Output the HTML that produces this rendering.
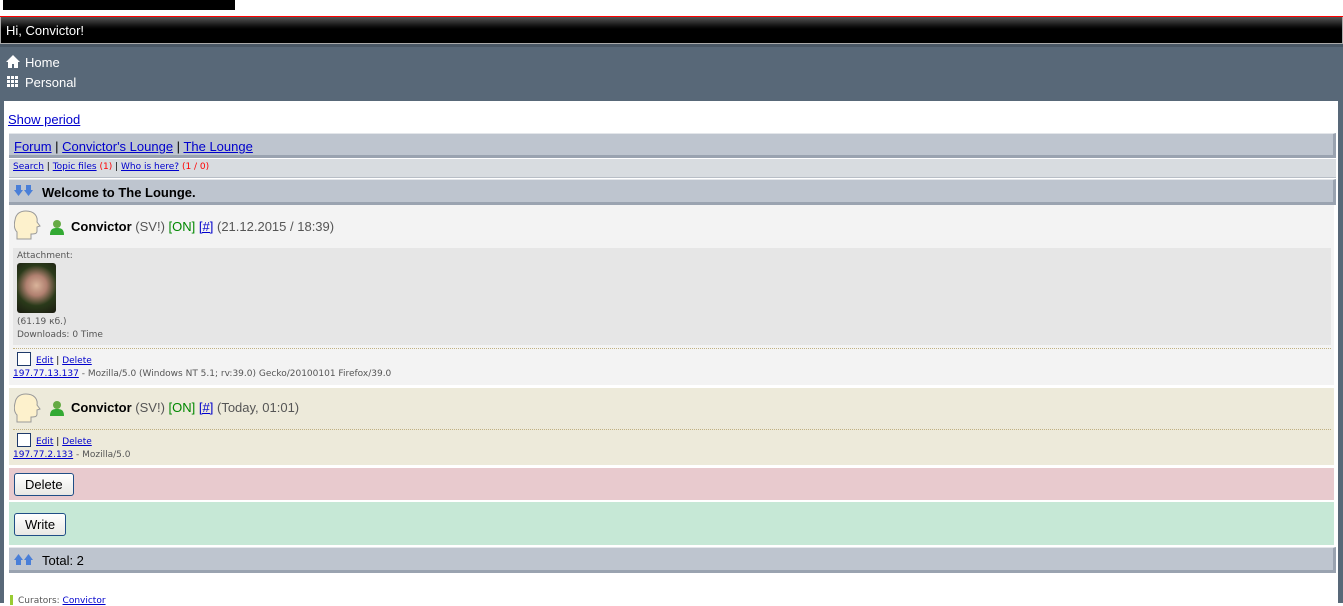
<!DOCTYPE html>
<html><head><style>
body{margin:0;width:1343px;height:603px;overflow:hidden;background:#fff;font-family:"Liberation Sans",Arial,sans-serif;position:relative}
.a{position:absolute}
a{color:#00c;text-decoration:underline}
.bar{position:absolute;left:9px;width:1324px;background:#bec5cf;border-top:1px solid #e3e6ea;border-right:3px solid #9aa3b0;border-bottom:3px solid #9aa3b0}
.sm{font-size:9px;font-family:"DejaVu Sans",Verdana,sans-serif}
.btn{position:absolute;left:14px;background:linear-gradient(#fff,#e8e8e4);border:1px solid #1f4e86;border-radius:3px;font-size:13px;padding:3px 10px;color:#000;font-family:"Liberation Sans",Arial,sans-serif}
.dot{position:absolute;left:13px;width:1318px;border-top:1px dotted #c0b080}
.g{color:#555}
</style></head><body>
<div class="a" style="left:3px;top:0;width:232px;height:10px;background:#000"></div>
<div class="a" style="left:0;top:16px;width:1343px;height:1px;background:#f00"></div>
<div class="a" style="left:0;top:17px;height:27px;background:linear-gradient(#555 0,#111 9px,#000 12px);border:1px solid #aaa;border-top:none;color:#fff;font-size:13px;line-height:28px;padding-left:5px;box-sizing:border-box;width:1343px">Hi, Convictor!</div>
<div class="a" style="left:0;top:44px;width:1343px;height:559px;background:#586878"></div>
<div class="a" style="left:0;top:44px;width:1343px;height:3px;background:#4a5866"></div>
<div class="a" style="left:4px;top:101px;width:1334px;height:502px;background:#fff"></div>
<svg class="a" style="left:6px;top:55px" width="14" height="13" viewBox="0 0 14 13"><path d="M7 0L0 7h2v6h4V9h2v4h4V7h2z" fill="#fff"/></svg>
<div class="a" style="left:25px;top:55px;color:#fff;font-size:13px">Home</div>
<svg class="a" style="left:7px;top:76px" width="12" height="12"><g fill="#fff"><rect x="0" y="0" width="3" height="3"/><rect x="4" y="0" width="3" height="3"/><rect x="8" y="0" width="3" height="3"/><rect x="0" y="4" width="3" height="3"/><rect x="4" y="4" width="3" height="3"/><rect x="8" y="4" width="3" height="3"/><rect x="0" y="8" width="3" height="3"/><rect x="4" y="8" width="3" height="3"/><rect x="8" y="8" width="3" height="3"/></g></svg>
<div class="a" style="left:25px;top:75px;color:#fff;font-size:13px">Personal</div>
<div class="a" style="left:8px;top:112px;font-size:13px"><a>Show period</a></div>
<div class="bar" style="top:133px;height:21px"></div>
<div class="a" style="left:14px;top:139px;font-size:13px"><a>Forum</a> | <a>Convictor's Lounge</a> | <a>The Lounge</a></div>
<div class="a" style="left:9px;top:159px;width:1327px;height:18px;background:#d8dce0;border-bottom:1px solid #b8bec6"></div>
<div class="a sm" style="left:13px;top:162px"><a>Search</a> | <a>Topic files</a> <span style="color:red">(1)</span> | <a>Who is here?</a> <span style="color:red">(1 / 0)</span></div>
<div class="bar" style="top:179px;height:22px"></div>
<svg class="a" style="left:14px;top:185px" width="20" height="11"><path d="M2 0h5v5h2l-4.5 6L0 5h2z M12 0h5v5h2l-4.5 6L10 5h2z" fill="#4a7fd8"/></svg>
<div class="a" style="left:42px;top:185px;font-size:13px;font-weight:bold">Welcome to The Lounge.</div>
<div class="a" style="left:9px;top:205px;width:1325px;height:180px;background:#f3f3f3"></div>
<div class="a" style="left:9px;top:388px;width:1325px;height:77px;background:#edeada"></div>
<svg class="a" style="left:14px;top:209px" width="28" height="32"><path d="M12 2c8 0 12 5 11 11l3 4-3 1v4c0 3-3 3-6 3v5H3v-7c-3-3-3-8-2-12 1-6 5-9 11-9z" fill="#fdf1cc" stroke="#999"/></svg>
<svg class="a" style="left:14px;top:392px" width="28" height="32"><path d="M12 2c8 0 12 5 11 11l3 4-3 1v4c0 3-3 3-6 3v5H3v-7c-3-3-3-8-2-12 1-6 5-9 11-9z" fill="#fdf1cc" stroke="#999"/></svg>
<svg class="a" style="left:49px;top:219px" width="16" height="16"><circle cx="8" cy="5" r="4" fill="#6a4"/><path d="M1 16c0-6 3-7 7-7s7 1 7 7z" fill="#3a3"/></svg>
<svg class="a" style="left:49px;top:400px" width="16" height="16"><circle cx="8" cy="5" r="4" fill="#6a4"/><path d="M1 16c0-6 3-7 7-7s7 1 7 7z" fill="#3a3"/></svg>
<div class="a" style="left:71px;top:219px;font-size:13px"><b>Convictor</b> <span class="g">(SV!)</span> <span style="color:#080">[ON]</span> <a>[#]</a> <span class="g">(21.12.2015 / 18:39)</span></div>
<div class="a" style="left:71px;top:400px;font-size:13px"><b>Convictor</b> <span class="g">(SV!)</span> <span style="color:#080">[ON]</span> <a>[#]</a> <span class="g">(Today, 01:01)</span></div>
<div class="a" style="left:13px;top:248px;width:1318px;height:97px;background:#e6e6e6"></div>
<div class="a sm g" style="left:17px;top:251px">Attachment:</div>
<div class="a" style="left:17px;top:263px;width:39px;height:50px;border-radius:3px;background:radial-gradient(circle at 50% 45%,#d9b39a 0,#b08070 30%,#2a3a1a 60%,#1a1a10)"></div>
<div class="a sm g" style="left:17px;top:317px">(61.19 кб.)</div>
<div class="a sm g" style="left:17px;top:330px">Downloads: 0 Time</div>
<div class="dot" style="top:348px"></div>
<div class="dot" style="top:429px"></div>
<div class="a" style="left:17px;top:352px;width:12px;height:12px;border:1px solid #1f3a6a;background:#fff"></div>
<div class="a sm" style="left:36px;top:356px"><a>Edit</a> | <a>Delete</a></div>
<div class="a sm" style="left:13px;top:369px"><a>197.77.13.137</a> <span class="g">- Mozilla/5.0 (Windows NT 5.1; rv:39.0) Gecko/20100101 Firefox/39.0</span></div>
<div class="a" style="left:17px;top:433px;width:12px;height:12px;border:1px solid #1f3a6a;background:#fff"></div>
<div class="a sm" style="left:36px;top:437px"><a>Edit</a> | <a>Delete</a></div>
<div class="a sm" style="left:13px;top:450px"><a>197.77.2.133</a> <span class="g">- Mozilla/5.0</span></div>
<div class="a" style="left:9px;top:468px;width:1325px;height:32px;background:#e8cace"></div>
<div class="btn" style="top:473px">Delete</div>
<div class="a" style="left:9px;top:502px;width:1325px;height:43px;background:#c6e8d6"></div>
<div class="btn" style="top:513px">Write</div>
<div class="bar" style="top:547px;height:22px"></div>
<svg class="a" style="left:14px;top:554px" width="20" height="11"><path d="M2 11h5V6h2L4.5 0 0 6h2z M12 11h5V6h2L14.5 0 10 6h2z" fill="#4a7fd8"/></svg>
<div class="a" style="left:42px;top:553px;font-size:13px">Total: 2</div>
<div class="a" style="left:10px;top:595px;width:3px;height:10px;background:#9c3"></div>
<div class="a sm g" style="left:18px;top:596px">Curators: <a>Convictor</a></div>
</body></html>
